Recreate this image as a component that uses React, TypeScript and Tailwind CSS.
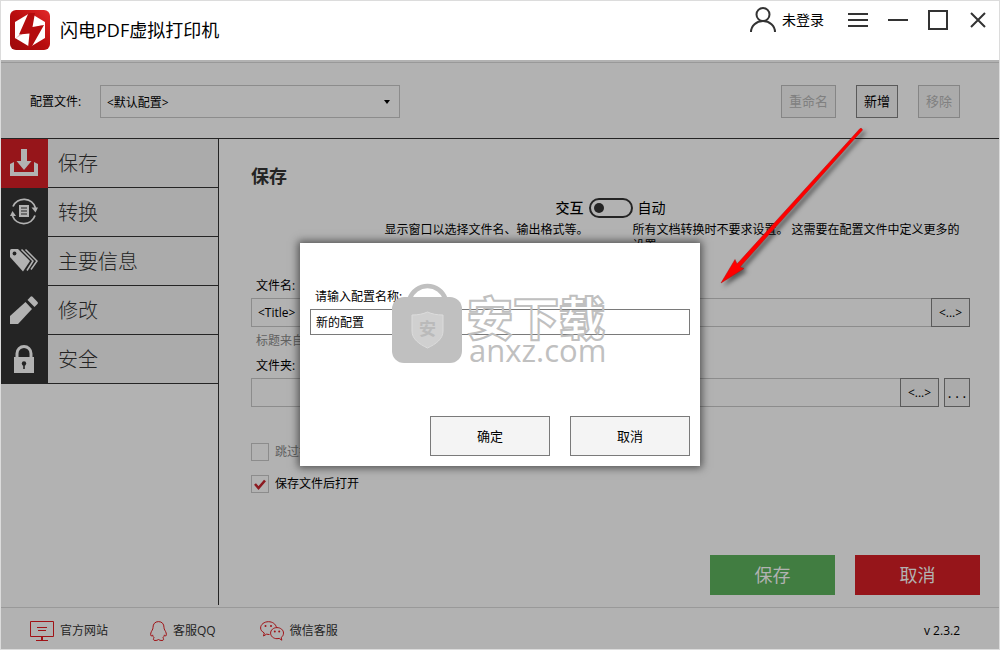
import { useState } from "react";

type Section = {
  icon: React.ReactElement;
  label: string;
};

const SECTIONS: Section[] = [
  {
    icon: (
      <svg aria-hidden className="h-7 w-7" fill="#b2b2b2" viewBox="0 0 28 28">
        <path d="M11 0h6v12h4.500L14 21 6.500 12H11z" />
        <path d="M0 15l4-2v10h20V13l4 2v12H0z" />
      </svg>
    ),
    label: "保存",
  },
  {
    icon: (
      <svg aria-hidden className="h-7 w-7" viewBox="0 0 28 28">
        <g fill="none" stroke="#b2b2b2" strokeWidth="1.800">
          <path d="M3 8.500A12 12 0 0 1 25.500 10" />
          <path d="M25 17.500A12 12 0 0 1 2.500 18" />
        </g>
        <path d="M21.500 9.500H28l-2.500 5z" fill="#b2b2b2" />
        <path d="M0 18h6l-3.500-5z" fill="#b2b2b2" />
        <path d="M9 7h10v12H9z" fill="#b2b2b2" />
        <path d="M11 10h6M11 13h6M11 16h6" stroke="#242424" />
      </svg>
    ),
    label: "转换",
  },
  {
    icon: (
      <svg aria-hidden className="h-7 w-7" viewBox="0 0 28 28">
        <path
          d="M0 3.500Q0 2 1.500 2H8L20 14 13 24.500 0 10z"
          fill="#b2b2b2"
        />
        <circle cx="4.500" cy="6.500" fill="#242424" r="1.900" />
        <path
          d="M11.500 2.500L23 14 17 23.500M15.500 2.500L27 14 21 22.500"
          fill="none"
          stroke="#b2b2b2"
          strokeWidth="1.500"
        />
      </svg>
    ),
    label: "主要信息",
  },
  {
    icon: (
      <svg aria-hidden className="h-7 w-7" fill="#b2b2b2" viewBox="0 0 28 28">
        <path d="M0 20L15.500 6 22 13 8 28H0z" />
        <path d="M17.500 4L20.500.8Q21.500-.2 22.500.8L27.500 6Q28.300 7 27.500 8L24.500 11z" />
      </svg>
    ),
    label: "修改",
  },
  {
    icon: (
      <svg aria-hidden className="h-7 w-7" viewBox="0 0 28 28">
        <path
          d="M7 13V8.500a7 7 0 0 1 14 0V13"
          fill="none"
          stroke="#b2b2b2"
          strokeWidth="3"
        />
        <path d="M4 12h20v16H4z" fill="#b2b2b2" />
        <circle cx="14" cy="18.500" fill="#242424" r="2.200" />
        <path d="M13.200 19h1.600v5h-1.600z" fill="#242424" />
      </svg>
    ),
    label: "安全",
  },
];

function Logo() {
  return (
    <svg aria-hidden className="h-10 w-10" viewBox="0 0 40 40">
      <defs>
        <linearGradient id="logo-bg" x1="0" x2="1" y1="1" y2="0">
          <stop offset="0" stopColor="#9c0a0c" />
          <stop offset="0.5" stopColor="#b80c0e" />
          <stop offset="1" stopColor="#e32a2a" />
        </linearGradient>
      </defs>
      <rect fill="url(#logo-bg)" height="40" rx="6" width="40" />
      <path d="M20 3L35 12v16l-15 9L5 28V12z" fill="#fff" />
      <path d="M9 25l5-2-9 6zM32 15l-9 3 6 3z" fill="#e0b4b4" />
      <path d="M18.500 3L9 24.500l10.500-1L18 38h3l13-23-11.500 2L25 3z" fill="#b40c0e" />
    </svg>
  );
}

function TitleBar() {
  return (
    <header className="flex h-[59px] shrink-0 items-start justify-between bg-white pl-[9px] pr-[11px]">
      <div className="flex items-center gap-2.5 pt-[9px]">
        <Logo />
        <h1 className="text-lg">闪电PDF虚拟打印机</h1>
      </div>
      <div className="flex h-[25px] items-center gap-5 pt-3 text-[#333]">
        <button className="mr-1 flex items-center gap-1.5 text-sm text-black" type="button">
          <svg aria-hidden className="h-[25px] w-[26px]" fill="none" stroke="#333" strokeWidth="2" viewBox="0 0 26 25">
            <circle cx="13" cy="7.500" r="6.500" />
            <path d="M1 25a12 11 0 0 1 24 0" />
          </svg>
          未登录
        </button>
        <button aria-label="菜单" type="button">
          <svg aria-hidden className="h-5 w-5" stroke="currentColor" strokeWidth="2" viewBox="0 0 20 20">
            <path d="M0 4h20M0 10h20M0 16h20" />
          </svg>
        </button>
        <button aria-label="最小化" type="button">
          <svg aria-hidden className="h-5 w-5" stroke="currentColor" strokeWidth="2" viewBox="0 0 20 20">
            <path d="M0 10h20" />
          </svg>
        </button>
        <button aria-label="最大化" type="button">
          <svg aria-hidden className="h-5 w-5" fill="none" stroke="currentColor" strokeWidth="2" viewBox="0 0 20 20">
            <path d="M1 1h18v18H1z" />
          </svg>
        </button>
        <button aria-label="关闭" type="button">
          <svg aria-hidden className="h-5 w-5" stroke="currentColor" strokeWidth="2" viewBox="0 0 20 20">
            <path d="M3 3l14 14M17 3L3 17" />
          </svg>
        </button>
      </div>
    </header>
  );
}

function ProfileBar() {
  return (
    <div className="flex shrink-0 items-center border-b border-[#242424] pb-5 pl-[29px] pr-[39px] pt-[22px] text-xs">
      <label className="w-[70px]" htmlFor="profile">
        配置文件:
      </label>
      <div className="relative w-[300px]">
        <select
          className="h-[33px] w-full appearance-none border border-[#8c8c8c] bg-transparent px-1.5 pt-0.5"
          id="profile"
        >
          <option>&lt;默认配置&gt;</option>
        </select>
        <svg aria-hidden className="pointer-events-none absolute right-2.5 top-[15px] h-1 w-1.5" viewBox="0 0 6 4">
          <path d="M0 0h6L3 4z" />
        </svg>
      </div>
      <div className="ml-auto flex gap-5">
        <button className="h-[33px] w-[55px] border border-[#858585] bg-[#ababab] text-[13px] text-[#808080]" disabled type="button">
          重命名
        </button>
        <button className="h-[33px] w-[42px] border border-[#5a5a5a] bg-[#ababab] text-[13px]" type="button">
          新增
        </button>
        <button className="h-[33px] w-[42px] border border-[#858585] bg-[#ababab] text-[13px] text-[#808080]" disabled type="button">
          移除
        </button>
      </div>
    </div>
  );
}

function Sidebar() {
  const [active, setActive] = useState(0);

  return (
    <nav className="mb-0.5 w-[218px] shrink-0 border-r border-[#242424]">
      {SECTIONS.map((section, i) => (
        <button
          className="flex h-[49px] w-full text-left"
          key={section.label}
          onClick={() => setActive(i)}
          type="button"
        >
          <span
            className={`flex h-full w-[47px] items-center pb-px pl-[9px] ${
              active === i ? "bg-[#96151a]" : "bg-[#242424]"
            }`}
          >
            {section.icon}
          </span>
          <span className="flex h-full flex-1 items-center border-b border-[#242424] bg-[#ababab] pl-2.5 pt-0.5 text-xl font-light text-[#242424]">
            {section.label}
          </span>
        </button>
      ))}
    </nav>
  );
}

function SavePanel() {
  const [auto, setAuto] = useState(false);
  const [openAfter, setOpenAfter] = useState(true);

  return (
    <main className="flex flex-1 flex-col pl-8 pr-[29px] pt-[23px] text-xs">
      <h2 className="text-lg font-bold text-[#242424]">保存</h2>

      {/* 交互 / 自动 */}
      <div className="mt-2 grid grid-cols-[1fr_44px_1fr] items-start">
        <div className="pr-[5px] text-right text-sm font-medium leading-5">交互</div>
        <button
          aria-checked={auto}
          aria-label="自动"
          className="flex h-5 w-11 items-center rounded-full border-2 border-[#242424] px-[3px]"
          onClick={() => setAuto((v) => !v)}
          role="switch"
          type="button"
        >
          <span className={`h-2.5 w-2.5 rounded-full bg-[#242424] ${auto ? "ml-auto" : ""}`} />
        </button>
        <div className="pl-[5px] text-sm leading-5">自动</div>
        <p className="mt-1 text-right leading-4">显示窗口以选择文件名、输出格式等。</p>
        <span />
        <p className="mt-1 leading-4">所有文档转换时不要求设置。 这需要在配置文件中定义更多的设置。</p>
      </div>

      <label className="mt-[22px] pl-[5px] leading-5" htmlFor="file-name">
        文件名:
      </label>
      <div className="mt-0.5 flex">
        <input
          className="h-[29px] min-w-0 flex-1 border border-r-0 border-[#8c8c8c] bg-transparent px-1.5"
          defaultValue="<Title>"
          id="file-name"
        />
        <button className="h-[29px] w-[39px] border border-[#5a5a5a] bg-[#ababab]" type="button">
          &lt;...&gt;
        </button>
      </div>
      <p className="mt-1 pl-[5px] leading-5 text-[#606060]">标题来自</p>
      <label className="mt-[5px] pl-[5px] leading-5" htmlFor="folder">
        文件夹:
      </label>
      <div className="mt-0.5 flex">
        <input
          className="h-[29px] min-w-0 flex-1 border border-r-0 border-[#8c8c8c] bg-transparent px-1.5"
          id="folder"
        />
        <button className="h-[29px] w-[39px] border border-[#5a5a5a] bg-[#ababab]" type="button">
          &lt;...&gt;
        </button>
        <button className="ml-[5px] h-[29px] w-[26px] border border-[#5a5a5a] bg-[#ababab] text-sm" type="button">
          . . .
        </button>
      </div>

      <label className="mt-9 flex h-[18px] items-center gap-1.5 text-[#606060]">
        <input className="h-[18px] w-[18px] appearance-none border border-[#8c8c8c]" disabled type="checkbox" />
        跳过打印
      </label>
      <label className="mt-3.5 flex h-[18px] items-center gap-1.5">
        <span className="relative flex">
          <input
            checked={openAfter}
            className="h-[18px] w-[18px] appearance-none border border-[#8c8c8c]"
            onChange={(e) => setOpenAfter(e.target.checked)}
            type="checkbox"
          />
          {openAfter ? (
            <svg aria-hidden className="pointer-events-none absolute inset-0 h-[18px] w-[18px]" viewBox="0 0 18 18">
              <path d="M4 9l3.500 4L14 5.500" fill="none" stroke="#8c1a20" strokeWidth="2.600" />
            </svg>
          ) : null}
        </span>
        保存文件后打开
      </label>

      <div className="-mr-2.5 mb-3 mt-auto flex justify-end gap-5 text-lg text-[#b2b2b2]">
        <button className="h-10 w-[125px] bg-[#417d41]" type="button">
          保存
        </button>
        <button className="h-10 w-[125px] bg-[#96151a]" type="button">
          取消
        </button>
      </div>
    </main>
  );
}

function Footer() {
  return (
    <footer className="flex h-[42px] shrink-0 items-center border-t border-[#999] pl-[29px] pr-[39px] pt-1 text-xs text-[#242424]">
      <a className="flex items-center gap-1.5" href="#site">
        <svg aria-hidden className="h-5 w-6" fill="none" stroke="#a01216" viewBox="0 0 24 20">
          <path d="M.5.500h23v15H.500zM7 6.500h10M8 9.500h8M6 19.500h12" />
          <path d="M12 16v3" strokeWidth="2" />
        </svg>
        官方网站
      </a>
      <a className="ml-[42px] flex items-center gap-1.5" href="#qq">
        <svg aria-hidden className="h-5 w-[17px]" fill="none" stroke="#a01216" viewBox="0 0 17 20">
          <path d="M8.500.600C5 .6 3 3 3 6.500c0 1-.3 1.800-.8 2.700C1 11 .3 13 .8 14.500c.3.800 1.200.2 1.700-.6.3 1.300.9 2.200 1.700 3-1.200.7-1.200 2.500.8 2.600 1.500.1 2.600-.3 3.500-1 .9.700 2 1.100 3.500 1 2-.1 2-1.900.8-2.600.8-.8 1.400-1.700 1.700-3 .5.800 1.400 1.400 1.700.6.500-1.500-.2-3.500-1.400-5.300-.5-.9-.8-1.700-.8-2.700C14 3 12 .6 8.500.600z" />
        </svg>
        客服QQ
      </a>
      <a className="ml-11 flex items-center gap-1.5" href="#wechat">
        <svg aria-hidden className="h-5 w-6" fill="none" stroke="#a01216" viewBox="0 0 24 20">
          <path d="M9.500 13.500c-1 0-2-.1-2.800-.4L3.500 15l.8-3C2 10.700.600 9 .6 7 .6 3.400 4.200.700 8.500.7c4 0 7.300 2.400 7.900 5.700" />
          <path d="M17 6.600c-3.600 0-6.400 2.400-6.400 5.500s2.800 5.600 6.400 5.600c.8 0 1.500-.1 2.200-.3l2.600 1.800-.6-2.700c1.400-1 2.300-2.600 2.300-4.400 0-3.100-2.900-5.500-6.500-5.500z" />
          <g fill="#a01216" stroke="none">
            <circle cx="5.500" cy="5" r="1" />
            <circle cx="11" cy="5" r="1" />
            <circle cx="14.800" cy="10.500" r="1" />
            <circle cx="19.200" cy="10.500" r="1" />
          </g>
        </svg>
        微信客服
      </a>
      <span className="ml-auto text-black">v 2.3.2</span>
    </footer>
  );
}

function Watermark() {
  return (
    <div aria-hidden className="pointer-events-none absolute left-[92px] top-10 flex gap-[5px] text-[#c0c0c0]">
      <svg className="h-20 w-[70px]" viewBox="0 0 70 80">
        <path d="M17.500 16a19 19 0 0 1 36 0" fill="none" stroke="#c0c0c0" strokeWidth="4.500" />
        <rect fill="#c0c0c0" height="66" rx="12" width="70" y="14" />
        <path
          d="M20 32c6 0 11-1 15.500-3 4.500 2 9.500 3 15.500 3v16c0 8-7 13-15.500 17C27 61 20 56 20 48z"
          fill="#d0d0d0"
          stroke="#dcdcdc"
        />
        <text fill="#bababa" fontSize="17" fontWeight="700" textAnchor="middle" x="35.500" y="52">
          安
        </text>
      </svg>
      <div>
        <div className="mt-[11px] text-[46px] font-black leading-[46px] text-transparent [-webkit-text-stroke:2px_#c0c0c0]">
          安下载
        </div>
        <div className="pl-0.5 font-['Open_Sans'] text-[31px] leading-5">anxz.com</div>
      </div>
    </div>
  );
}

function NameDialog() {
  return (
    <div className="absolute inset-0 flex items-center justify-center">
      <form
        aria-label="新增配置"
        className="relative w-[400px] bg-white px-2.5 pb-2.5 pt-11 text-xs shadow-[0_0_8px_2px_rgba(0,0,0,0.55)]"
        onSubmit={(e) => e.preventDefault()}
        role="dialog"
      >
        <label className="block pl-[5px] leading-5" htmlFor="config-name">
          请输入配置名称:
        </label>
        <input
          className="mt-0.5 h-[26px] w-full border border-[#7a7a7a] px-[5px]"
          defaultValue="新的配置"
          id="config-name"
        />
        <div className="mt-[81px] flex justify-end gap-5">
          <button className="h-10 w-[120px] border border-[#7a7a7a] bg-[#f4f4f4] pt-0.5 text-[13px]" type="submit">
            确定
          </button>
          <button className="h-10 w-[120px] border border-[#7a7a7a] bg-[#f4f4f4] pt-0.5 text-[13px]" type="button">
            取消
          </button>
        </div>
        <Watermark />
      </form>
    </div>
  );
}

function Arrow() {
  return (
    <svg
      aria-hidden
      className="pointer-events-none absolute right-[129px] top-[62px] h-[170px] w-[150px] drop-shadow-[3px_3px_2px_rgba(0,0,0,0.5)]"
      fill="#f00"
      viewBox="0 0 150 170"
    >
      <path d="M1 161L15 137.500 17 142 140 6.500Q142 5.500 142.500 8L20 145 24 146.500z" stroke="#b01010" strokeWidth="0.500" />
    </svg>
  );
}

export default function App() {
  return (
    <div className="flex min-h-screen flex-col border border-[#dcdcdc] bg-[#b2b2b2] font-['Open_Sans','Noto_Sans_CJK_SC',sans-serif] text-black">
      <TitleBar />
      <div className="relative flex flex-1 flex-col pt-0.5">
        <div className="flex flex-1 flex-col border-t border-[#999]">
          <ProfileBar />
          <div className="flex flex-1">
            <Sidebar />
            <SavePanel />
          </div>
          <Footer />
        </div>
        <NameDialog />
        <Arrow />
      </div>
    </div>
  );
}
